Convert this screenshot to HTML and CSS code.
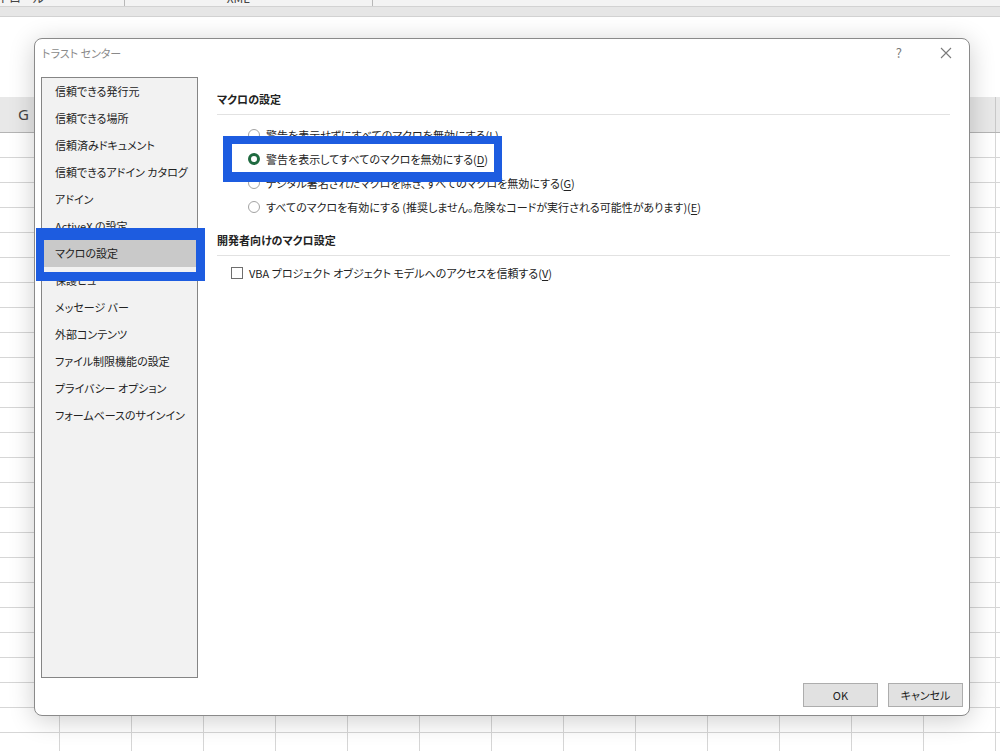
FILE: index.html
```html
<!DOCTYPE html>
<html lang="ja">
<head>
    <meta charset="UTF-8">
    <title>トラスト センター</title>
    <link rel="stylesheet" href="styles.css">
</head>
<body>
    <div class="ribbon-labels">
        <span class="group-label label-control">コントロール</span>
        <span class="group-label label-xml">XML</span>
    </div>
    <div class="ribbon-bar"></div>
    <div class="formula-gap"></div>
    <!-- column headers; only G shows outside the dialog -->
    <div class="col-heads">
        <div class="col-head">G</div>
        <div class="col-head"></div>
        <div class="col-head"></div>
        <div class="col-head"></div>
        <div class="col-head"></div>
        <div class="col-head"></div>
        <div class="col-head"></div>
        <div class="col-head"></div>
        <div class="col-head"></div>
        <div class="col-head"></div>
        <div class="col-head"></div>
        <div class="col-head"></div>
        <div class="col-head"></div>
        <div class="col-head"></div>
    </div>
    <div class="grid"></div>

    <!-- Trust Center dialog -->
    <div class="dialog">
        <div class="dialog-title">
            <span class="title-text">トラスト センター</span>
            <span class="title-help">?</span>
            <svg class="title-close" width="12" height="12" viewBox="0 0 12 12">
                <path d="M1 1 L11 11 M11 1 L1 11" stroke="#7a7a7a" stroke-width="1.1" fill="none"/>
            </svg>
        </div>
        <div class="dialog-body">
            <ul class="nav">
                <li class="nav-item">信頼できる発行元</li>
                <li class="nav-item">信頼できる場所</li>
                <li class="nav-item">信頼済みドキュメント</li>
                <li class="nav-item">信頼できるアドイン カタログ</li>
                <li class="nav-item">アドイン</li>
                <li class="nav-item">ActiveX の設定</li>
                <li class="nav-item selected">マクロの設定</li>
                <li class="nav-item">保護ビュー</li>
                <li class="nav-item">メッセージ バー</li>
                <li class="nav-item">外部コンテンツ</li>
                <li class="nav-item">ファイル制限機能の設定</li>
                <li class="nav-item">プライバシー オプション</li>
                <li class="nav-item">フォームベースのサインイン</li>
            </ul>
            <div class="panel">
                <h3 class="section-head">マクロの設定</h3>
                <div class="options">
                    <label class="option"><span class="radio"></span><span>警告を表示せずにすべてのマクロを無効にする(<u>L</u>)</span></label>
                    <label class="option"><span class="radio checked"></span><span>警告を表示してすべてのマクロを無効にする(<u>D</u>)</span></label>
                    <label class="option"><span class="radio"></span><span>デジタル署名されたマクロを除き、すべてのマクロを無効にする(<u>G</u>)</span></label>
                    <label class="option"><span class="radio"></span><span>すべてのマクロを有効にする (推奨しません。危険なコードが実行される可能性があります)(<u>E</u>)</span></label>
                </div>
                <h3 class="section-head second">開発者向けのマクロ設定</h3>
                <div class="options checks">
                    <label class="option"><span class="checkbox"></span><span>VBA プロジェクト オブジェクト モデルへのアクセスを信頼する(<u>V</u>)</span></label>
                </div>
            </div>
        </div>
        <div class="dialog-footer">
            <button class="btn">OK</button>
            <button class="btn">キャンセル</button>
        </div>

        <!-- blue highlight boxes drawn over the dialog -->
        <div class="mark mark-nav"></div>
        <div class="mark mark-option"></div>
    </div>
</body>
</html>
```

FILE: styles.css
```css
body {
    margin: 0;
    width: 1000px;
    height: 751px;
    overflow: hidden;
    background: #fff;
    font-family: "Noto Sans CJK JP", "Noto Sans", sans-serif;
    font-feature-settings: "palt";
    font-size: 11px;
    color: #222;
}

/* excel background */
.ribbon-labels {
    height: 6px;
    background: #f3f3f3;
    overflow: hidden;
    position: relative;
    font-size: 12px;
    color: #444;
}

.group-label {
    display: inline-block;
    margin-top: -10px;
    line-height: 16px;
    vertical-align: top;
}

.label-control {
    margin-left: -22px;
    width: 146px;
    border-right: 1px solid #b8b8b8;
}

.label-xml {
    margin-left: 99px;
    width: 145px;
    border-right: 1px solid #b8b8b8;
}

.ribbon-bar {
    height: 9px;
    background: #e6e6e6;
    border-top: 1px solid #d2d2d2;
    border-bottom: 1px solid #d2d2d2;
}

.formula-gap {
    height: 80px;
}

.col-heads {
    display: flex;
    margin-left: -12px;
    height: 35px;
    background: #e8e8e8;
    border-bottom: 1px solid #b4b4b4;
}

.col-head {
    flex: none;
    width: 72px;
    box-sizing: border-box;
    border-right: 1px solid #c8c8c8;
    text-align: center;
    line-height: 35px;
    font-family: "Noto Sans", sans-serif;
    font-size: 15px;
    color: #444;
}

.grid {
    height: 620px;
    background-image:
        linear-gradient(to right, transparent 71px, #d6d6d6 71px),
        linear-gradient(to bottom, transparent 24px, #d6d6d6 24px);
    background-size: 72px 25px, 72px 25px;
    background-position: -12px 0, 0 0;
}

/* dialog */
.dialog {
    position: absolute;
    left: 34px;
    top: 38px;
    width: 936px;
    height: 678px;
    box-sizing: border-box;
    padding: 0 6px;
    background: #fff;
    border: 1px solid #8a8a8a;
    border-radius: 8px;
    box-shadow: 0 4px 26px rgba(0, 0, 0, 0.2);
    display: flex;
    flex-direction: column;
}

.dialog-title {
    height: 38px;
    box-sizing: border-box;
    padding: 6px 0 0 1px;
    display: flex;
    align-items: flex-start;
    line-height: 16px;
}

.title-text {
    flex: 1;
    font-size: 11px;
    color: #8a8a8a;
}

.title-help {
    font-size: 13px;
    color: #7a7a7a;
    margin-right: 38px;
}

.title-close {
    margin-top: 2px;
    margin-right: 11px;
}

.dialog-body {
    display: flex;
    height: 601px;
}

.nav {
    list-style: none;
    margin: 0;
    padding: 0;
    width: 157px;
    box-sizing: border-box;
    background: #f2f2f2;
    border: 1px solid #858585;
}

.nav-item {
    height: 27px;
    line-height: 27px;
    padding-left: 13px;
    color: #222;
    white-space: nowrap;
}

.nav-item.selected {
    background: #c9c9c9;
}

.panel {
    flex: 1;
    padding: 14px 13px 0 19px;
}

.section-head {
    margin: 0;
    font-size: 11px;
    font-weight: bold;
    line-height: 16px;
    padding-bottom: 7px;
    border-bottom: 1px solid #e2e2e2;
    color: #222;
}

.section-head.second {
    margin-top: 13px;
}

.options {
    margin-top: 8px;
    padding-left: 31px;
}

.options.checks {
    margin-top: 5px;
    padding-left: 14px;
}

.option {
    display: flex;
    align-items: center;
    gap: 6px;
    height: 24px;
    white-space: nowrap;
    color: #222;
}

.option u {
    text-underline-offset: 2px;
}

.radio {
    flex: none;
    width: 12px;
    height: 12px;
    box-sizing: border-box;
    border: 1px solid #a3a3a3;
    border-radius: 50%;
    background: #fff;
}

.radio.checked {
    border: 3.5px solid #1f6a40;
}

.checkbox {
    flex: none;
    width: 12px;
    height: 12px;
    box-sizing: border-box;
    border: 1px solid #6e6e6e;
    background: #fff;
}

.dialog-footer {
    display: flex;
    justify-content: flex-end;
    gap: 10px;
    margin-top: 5px;
}

.btn {
    width: 75px;
    height: 24px;
    padding: 0;
    background: #e1e1e1;
    border: 1px solid #adadad;
    font-family: inherit;
    font-feature-settings: "palt";
    font-size: 11px;
    color: #222;
}

.mark {
    position: absolute;
    box-sizing: border-box;
    border-style: solid;
    border-color: #1d5ce0;
}

.mark-nav {
    left: 1px;
    top: 189px;
    width: 169px;
    height: 53px;
    border-width: 12px 9px 9px 8px;
}

.mark-option {
    left: 188px;
    top: 97px;
    width: 279px;
    height: 46px;
    border-width: 8px 8px 10px 9px;
}
```
